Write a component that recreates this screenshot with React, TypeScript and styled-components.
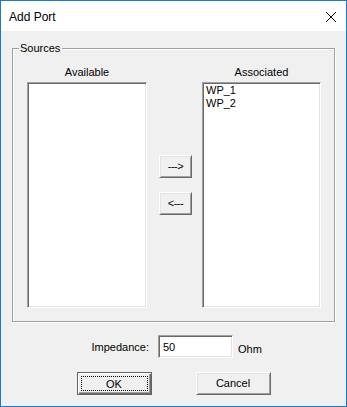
import styled, { createGlobalStyle } from "styled-components";

const GlobalStyle = createGlobalStyle`
  * { box-sizing: border-box; }
  html, body { margin: 0; padding: 0; background: #ffffff; }
  body {
    font-family: "Liberation Sans", Arial, sans-serif;
    font-size: 11px;
    color: #000;
  }
`;

const available: string[] = [];
const associated = ["WP_1", "WP_2"];

const App = () => {
  return (
    <>
      <GlobalStyle />
      <Window>
        <TitleBar>
          <Title>Add Port</Title>
          <CloseIcon width="12" height="12" viewBox="0 0 12 12">
            <path d="M1 1 L11 11 M11 1 L1 11" stroke="#000" strokeWidth="1" fill="none" />
          </CloseIcon>
        </TitleBar>
        <Body>
          <Group>
            <GroupTitle>Sources</GroupTitle>
            <Columns>
              <ListColumn $width={120}>
                <ColumnLabel>Available</ColumnLabel>
                <ListBox>
                  {available.map((item) => (
                    <ListItem key={item}>{item}</ListItem>
                  ))}
                </ListBox>
              </ListColumn>
              <Arrows>
                <ArrowButton>---&gt;</ArrowButton>
                <ArrowButton>&lt;---</ArrowButton>
              </Arrows>
              <ListColumn $width={119}>
                <ColumnLabel>Associated</ColumnLabel>
                <ListBox>
                  {associated.map((item) => (
                    <ListItem key={item}>{item}</ListItem>
                  ))}
                </ListBox>
              </ListColumn>
            </Columns>
          </Group>
          <FieldRow>
            <FieldLabel>Impedance:</FieldLabel>
            <TextInput defaultValue="50" />
            <Unit>Ohm</Unit>
          </FieldRow>
          <ButtonRow>
            <DialogButton $isDefault>
              <FocusRing>OK</FocusRing>
            </DialogButton>
            <DialogButton>Cancel</DialogButton>
          </ButtonRow>
        </Body>
      </Window>
    </>
  );
};

export default App;

const Window = styled.div`
  width: 347px;
  height: 407px;
  border: 1px solid #1979ca;
  display: flex;
  flex-direction: column;
  background: #f0f0f0;
  overflow: hidden;
`;

const TitleBar = styled.div`
  height: 30px;
  flex: none;
  background: #fff;
  display: flex;
  align-items: center;
  justify-content: space-between;
  padding: 0 9px 0 8px;
`;

const Title = styled.div`
  font-size: 12px;
  line-height: 14px;
  margin-top: 1px;
`;

const CloseIcon = styled.svg`
  display: block;
  margin-top: 1px;
`;

const Body = styled.div`
  flex: 1;
  display: flex;
  flex-direction: column;
  padding: 17px 11px 0;
  background: #f0f0f0;
`;

const Group = styled.div`
  position: relative;
  height: 274px;
  border: 1px solid #a0a0a0;
  box-shadow: inset 1px 1px 0 #fff, 1px 1px 0 #fff;
`;

const GroupTitle = styled.span`
  position: absolute;
  top: -7px;
  left: 6px;
  padding: 0 2px 0 1px;
  line-height: 13px;
  background: #f0f0f0;
`;

const Columns = styled.div`
  display: flex;
  padding: 17px 13px 13px 14px;
  height: 100%;
`;

const ListColumn = styled.div<{ $width: number }>`
  width: ${(p) => p.$width}px;
  display: flex;
  flex-direction: column;
`;

const ColumnLabel = styled.div`
  line-height: 13px;
  text-align: center;
  margin-bottom: 3px;
`;

const ListBox = styled.div`
  height: 226px;
  background: #fff;
  border-style: solid;
  border-width: 1px;
  border-color: #a0a0a0 #fff #fff #a0a0a0;
  box-shadow: inset 1px 1px 0 #696969, inset -1px -1px 0 #e3e3e3;
  padding: 1px 1px 1px 2px;
`;

const ListItem = styled.div`
  line-height: 13px;
  padding-left: 1px;
`;

const Arrows = styled.div`
  display: flex;
  flex-direction: column;
  gap: 14px;
  padding-top: 89px;
  margin: 0 10px 0 12px;
`;

const ArrowButton = styled.button`
  width: 33px;
  height: 23px;
  padding: 0 0 1px;
  font-family: "Liberation Sans", Arial, sans-serif;
  font-size: 11px;
  color: #000;
  background: #f0f0f0;
  border-style: solid;
  border-width: 1px;
  border-color: #fff #696969 #696969 #fff;
  box-shadow: inset 1px 1px 0 #e3e3e3, inset -1px -1px 0 #a0a0a0;
  letter-spacing: -0.5px;
`;

const FieldRow = styled.div`
  display: flex;
  align-items: center;
  margin-top: 13px;
  height: 23px;
`;

const FieldLabel = styled.div`
  width: 137px;
  text-align: right;
  margin-right: 9px;
`;

const TextInput = styled.input`
  width: 75px;
  height: 23px;
  padding: 0 0 0 4px;
  font-family: "Liberation Sans", Arial, sans-serif;
  font-size: 11px;
  color: #000;
  background: #fff;
  outline: none;
  border-style: solid;
  border-width: 1px;
  border-color: #a0a0a0 #fff #fff #a0a0a0;
  box-shadow: inset 1px 1px 0 #696969, inset -1px -1px 0 #e3e3e3;
`;

const Unit = styled.div`
  margin-left: 5px;
  margin-top: 5px;
`;

const ButtonRow = styled.div`
  display: flex;
  justify-content: center;
  gap: 44px;
  margin-top: 14px;
`;

const DialogButton = styled.button<{ $isDefault?: boolean }>`
  width: 75px;
  height: 23px;
  padding: ${(p) => (p.$isDefault ? "3px" : "0 0 1px")};
  display: flex;
  align-items: stretch;
  justify-content: center;
  font-family: "Liberation Sans", Arial, sans-serif;
  font-size: 11px;
  color: #000;
  background: #f0f0f0;
  border-style: solid;
  border-width: 1px;
  border-color: ${(p) => (p.$isDefault ? "#646464" : "#fff #696969 #696969 #fff")};
  box-shadow: ${(p) =>
    p.$isDefault
      ? "inset 1px 1px 0 #fff, inset -1px -1px 0 #696969, inset -2px -2px 0 #a0a0a0"
      : "inset 1px 1px 0 #e3e3e3, inset -1px -1px 0 #a0a0a0"};
  align-items: center;
`;

const FocusRing = styled.span`
  flex: 1;
  align-self: stretch;
  display: flex;
  align-items: center;
  justify-content: center;
  border: 1px dotted #000;
`;
